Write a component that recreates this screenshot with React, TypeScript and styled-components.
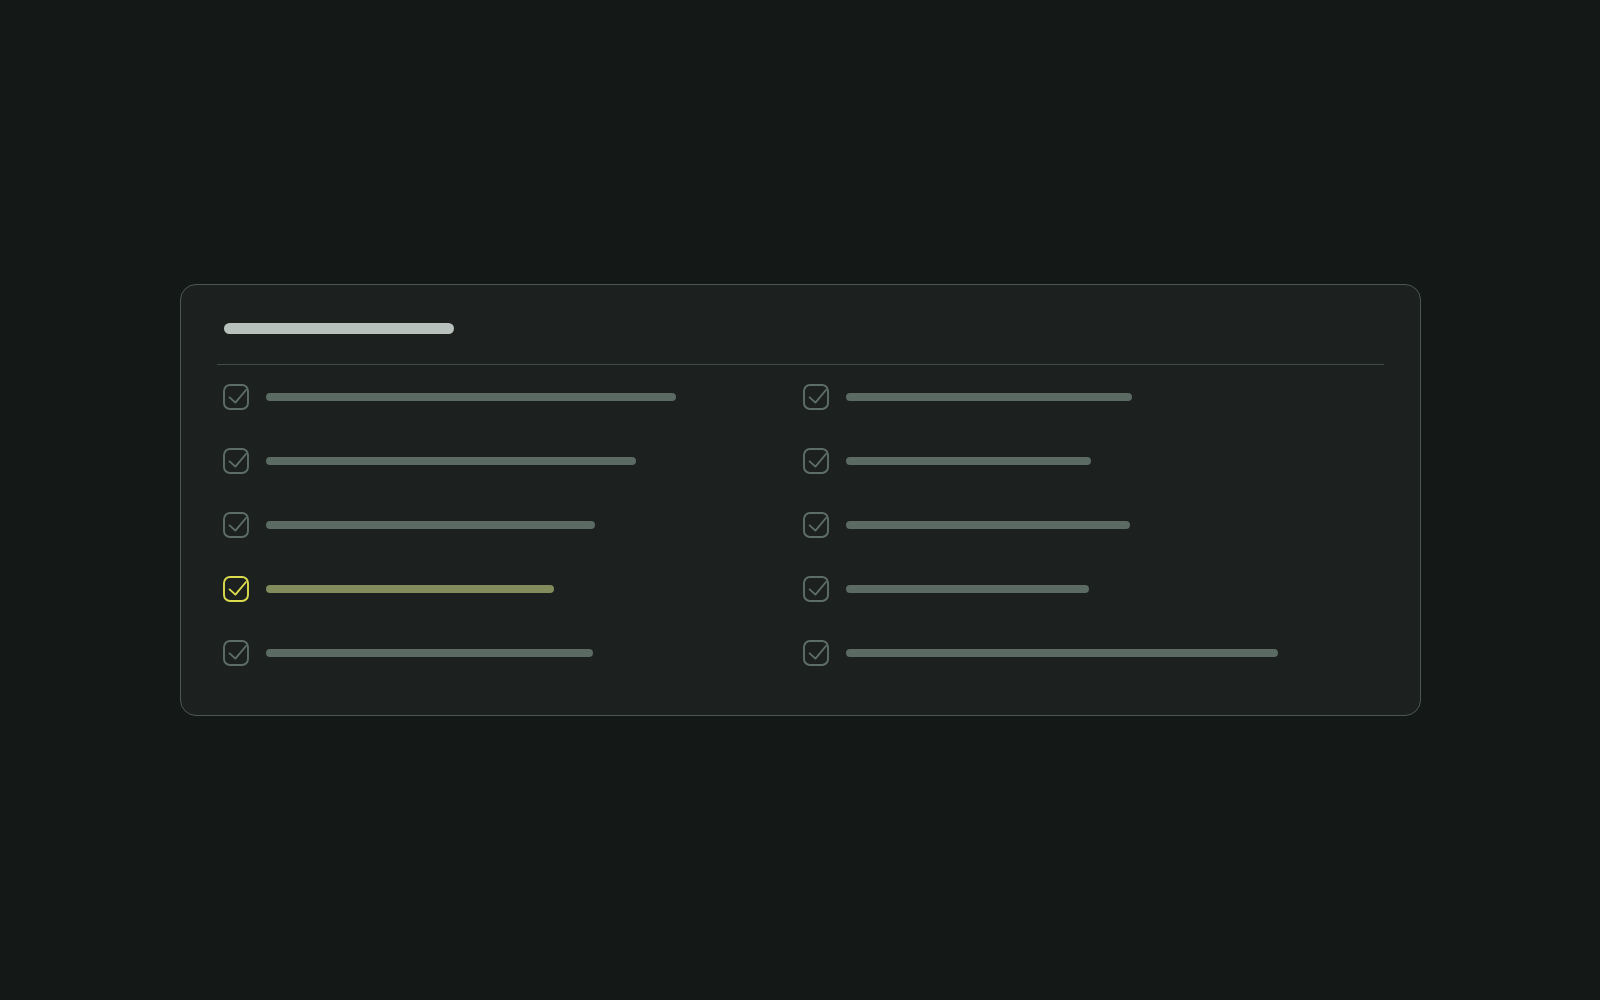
import { FC } from "react";
import styled, { createGlobalStyle } from "styled-components";

interface Task {
  id: number;
  width: number;
  active?: boolean;
}

// Left column first, then right column (grid flows by column)
const tasks: Task[] = [
  { id: 1, width: 410 },
  { id: 2, width: 370 },
  { id: 3, width: 329 },
  { id: 4, width: 288, active: true },
  { id: 5, width: 327 },
  { id: 6, width: 286 },
  { id: 7, width: 245 },
  { id: 8, width: 284 },
  { id: 9, width: 243 },
  { id: 10, width: 432 },
];

const GlobalStyle = createGlobalStyle`
  html, body {
    margin: 0;
    padding: 0;
    background: #141817;
    font-family: "Inter", "Liberation Sans", sans-serif;
  }
`;

const CheckIcon: FC<{ active?: boolean }> = ({ active }) => (
  <Box viewBox="0 0 26 26" width={26} height={26} $active={active}>
    <rect x="1" y="1" width="24" height="24" rx="6" fill="none" />
    <polyline points="6.6,13.4 12.4,18.6 23,6" fill="none" />
  </Box>
);

const TaskRow: FC<{ task: Task }> = ({ task }) => (
  <Row>
    <CheckIcon active={task.active} />
    <Line $active={task.active} style={{ width: task.width }} />
  </Row>
);

const App: FC = () => (
  <>
    <GlobalStyle />
    <Page>
      <Card>
        <Header>
          <Title />
        </Header>
        <Divider />
        <List>
          {tasks.map((task) => (
            <TaskRow key={task.id} task={task} />
          ))}
        </List>
      </Card>
    </Page>
  </>
);

const Page = styled.div`
  width: 1600px;
  height: 1000px;
  display: flex;
  align-items: flex-start;
  justify-content: center;
  padding-top: 284px;
  box-sizing: border-box;
`;

const Card = styled.div`
  width: 1241px;
  box-sizing: border-box;
  padding: 38px 36px 30px;
  background: #1c2120;
  border: 1px solid #4d5653;
  border-radius: 16px;
`;

const Header = styled.div`
  padding: 0 7px;
  height: 11px;
  margin-bottom: 30px;
`;

const Title = styled.div`
  width: 230px;
  height: 11px;
  border-radius: 6px;
  background: #b8c1bb;
`;

const Divider = styled.div`
  height: 1px;
  background: #414a47;
`;

const List = styled.div`
  display: grid;
  grid-template-columns: 1fr 1fr;
  grid-template-rows: repeat(5, 64px);
  grid-auto-flow: column;
  column-gap: 5px;
  padding: 0 6px;
`;

const Row = styled.div`
  display: flex;
  align-items: center;
  gap: 17px;
`;

const Box = styled.svg<{ $active?: boolean }>`
  flex-shrink: 0;
  stroke: ${({ $active }) => ($active ? "#dcdc4c" : "#5e6d67")};
  stroke-width: 1.9;
  stroke-linecap: round;
  stroke-linejoin: round;
`;

const Line = styled.div<{ $active?: boolean }>`
  height: 8px;
  border-radius: 4px;
  margin-top: -1px;
  background: ${({ $active }) => ($active ? "#818b5c" : "#5b6a63")};
`;

export default App;
